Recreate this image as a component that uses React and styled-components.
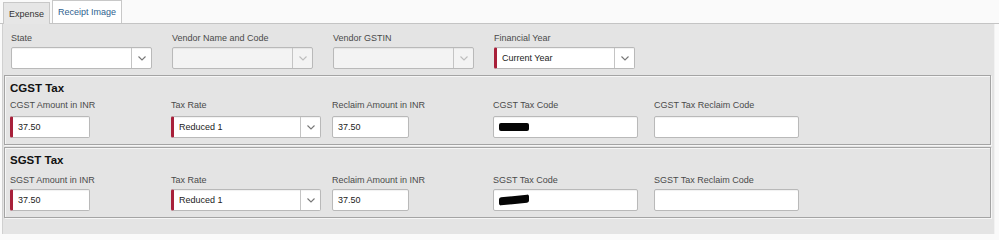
import React from "react";
import styled, { createGlobalStyle } from "styled-components";

const Global = createGlobalStyle`
  html, body { margin: 0; padding: 0; background: #fafafa; }
  body { font-family: "Liberation Sans", Arial, sans-serif; }
`;

const Page = styled.div`
  width: 999px;
  height: 234px;
  overflow: hidden;
  display: flex;
  flex-direction: column;
  background: #fafafa;
`;

const TabBar = styled.div`
  height: 24px;
  display: flex;
  align-items: flex-end;
  gap: 2px;
  padding-left: 3px;
  border-bottom: 1px solid #c4c4c4;
  box-sizing: border-box;
`;

const Tab = styled.div`
  height: ${(p) => (p.$active ? "22px" : "23px")};
  box-sizing: border-box;
  padding: 0 5px;
  display: flex;
  align-items: center;
  font-size: 9px;
  color: ${(p) => (p.$active ? "#333" : "#2f5f8f")};
  background: ${(p) => (p.$active ? "#e6e6e6" : "#ffffff")};
  border: 1px solid #c8c8c8;
  border-bottom: none;
  margin-bottom: ${(p) => (p.$active ? "-1px" : "0")};
`;

const Panel = styled.div`
  flex: 1;
  margin: 0 4px 0 2px;
  background: #e4e4e4;
  border-left: 1px solid #d0d0d0;
  border-right: 1px solid #f2f2f2;
  padding: 8px 3px 0 1px;
  display: flex;
  flex-direction: column;
`;

const Row = styled.div`
  display: grid;
  grid-template-columns: repeat(5, 161px);
  padding-left: ${(p) => p.$pad || 7}px;
`;

const Field = styled.div`
  display: flex;
  flex-direction: column;
  gap: ${(p) => p.$gap || 4}px;
`;

const Label = styled.div`
  font-size: 9px;
  line-height: 12px;
  color: #4a4a4a;
  white-space: nowrap;
`;

const Box = styled.div`
  width: ${(p) => p.$w}px;
  height: 22px;
  box-sizing: border-box;
  display: flex;
  align-items: stretch;
  background: ${(p) => (p.$disabled ? "#f3f3f3" : "#ffffff")};
  border: 1px solid #b9b9b9;
  border-left: ${(p) => (p.$required ? "3px solid #a8203a" : "1px solid #b9b9b9")};
  border-radius: 2px;
  box-shadow: inset 0 1px 1px rgba(0, 0, 0, 0.06);
`;

const Value = styled.div`
  flex: 1;
  display: flex;
  align-items: center;
  padding-left: 5px;
  font-size: 9px;
  color: #222;
`;

const Arrow = styled.div`
  width: 19px;
  border-left: 1px solid #c4c4c4;
  display: flex;
  align-items: center;
  justify-content: center;
  color: ${(p) => (p.$disabled ? "#bdbdbd" : "#777")};
`;

const Redact = styled.span`
  display: inline-block;
  width: 30px;
  height: 8px;
  background: #050505;
  border-radius: 2px;
  transform: ${(p) => (p.$tilt ? "skewY(-6deg)" : "none")};
`;

const Section = styled.div`
  margin-top: ${(p) => p.$mt}px;
  border: 1px solid #a4a4a4;
  box-shadow: inset 1px 1px 0 #f6f6f6, 1px 1px 0 #f6f6f6;
  padding: 5px 0 6px 0;
  display: flex;
  flex-direction: column;
`;

const Title = styled.div`
  font-size: 11.5px;
  font-weight: bold;
  line-height: 14px;
  color: #111;
  padding-left: 5px;
  margin-bottom: ${(p) => p.$mb}px;
`;

const Chevron = ({ disabled }) => (
  <Arrow $disabled={disabled}>
    <svg width="8" height="5" viewBox="0 0 8 5">
      <path d="M0.5 0.5 L4 4 L7.5 0.5" fill="none" stroke="currentColor" strokeWidth="1.1" />
    </svg>
  </Arrow>
);

const Select = ({ w, value, disabled, required }) => (
  <Box $w={w} $disabled={disabled} $required={required}>
    <Value>{value}</Value>
    <Chevron disabled={disabled} />
  </Box>
);

const Input = ({ w, value, required, children }) => (
  <Box $w={w} $required={required}>
    <Value>{value}{children}</Value>
  </Box>
);

const TaxSection = ({ name, mt, tilt, titleGap, fieldGap }) => (
  <Section $mt={mt}>
    <Title $mb={titleGap}>{name} Tax</Title>
    <Row $pad={5}>
      <Field $gap={fieldGap}>
        <Label>{name} Amount in INR</Label>
        <Input w={80} value="37.50" required />
      </Field>
      <Field $gap={fieldGap}>
        <Label>Tax Rate</Label>
        <Select w={150} value="Reduced 1" required />
      </Field>
      <Field $gap={fieldGap}>
        <Label>Reclaim Amount in INR</Label>
        <Input w={77} value="37.50" />
      </Field>
      <Field $gap={fieldGap}>
        <Label>{name} Tax Code</Label>
        <Input w={145}>
          <Redact $tilt={tilt} />
        </Input>
      </Field>
      <Field $gap={fieldGap}>
        <Label>{name} Tax Reclaim Code</Label>
        <Input w={145} />
      </Field>
    </Row>
  </Section>
);

export default function App() {
  return (
    <Page>
      <Global />
      <TabBar>
        <Tab $active>Expense</Tab>
        <Tab>Receipt Image</Tab>
      </TabBar>
      <Panel>
        <Row $pad={7}>
          <Field $gap={3}>
            <Label>State</Label>
            <Select w={141} value="" />
          </Field>
          <Field $gap={3}>
            <Label>Vendor Name and Code</Label>
            <Select w={141} value="" disabled />
          </Field>
          <Field $gap={3}>
            <Label>Vendor GSTIN</Label>
            <Select w={141} value="" disabled />
          </Field>
          <Field $gap={3}>
            <Label>Financial Year</Label>
            <Select w={141} value="Current Year" required />
          </Field>
        </Row>
        <TaxSection name="CGST" mt={6} titleGap={4} fieldGap={5} />
        <TaxSection name="SGST" mt={2} titleGap={7} fieldGap={3} tilt />
      </Panel>
    </Page>
  );
}
